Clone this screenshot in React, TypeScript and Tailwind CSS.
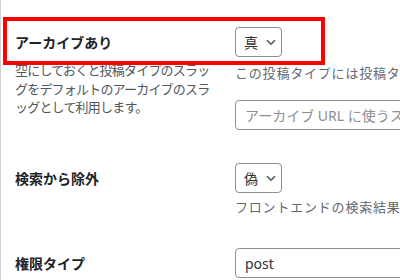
import React from "react";

const font = { fontFamily: '"Noto Sans", "Noto Sans CJK JP", sans-serif' };

function Chevron() {
  return (
    <svg width="10" height="7" viewBox="0 0 10 7" className="ml-[8px]">
      <path d="M1 1.2 L5 5.2 L9 1.2" fill="none" stroke="#50575e" strokeWidth="1.6" />
    </svg>
  );
}

function Select({ value }: { value: string }) {
  return (
    <div className="flex h-[30px] w-[47px] items-center rounded-[4px] border border-[#8c8f94] pl-[8px] text-[14px] text-[#2c3338]">
      <span>{value}</span>
      <Chevron />
    </div>
  );
}

function Input({ children, placeholder }: { children: React.ReactNode; placeholder?: boolean }) {
  return (
    <div
      className={
        "flex h-[30px] w-[320px] items-center overflow-hidden rounded-[4px] border border-[#8c8f94] pl-[9px] text-[14px] whitespace-nowrap " +
        (placeholder ? "text-[#8c8f94]" : "text-[#2c3338]")
      }
    >
      {children}
    </div>
  );
}

function Label({ children }: { children: React.ReactNode }) {
  return (
    <div className="flex h-[30px] items-center text-[14px] font-semibold text-[#1d2327] whitespace-nowrap">
      {children}
    </div>
  );
}

export default function App() {
  return (
    <div
      className="relative h-[280px] w-[400px] overflow-hidden border-l border-[#d0d0d0] bg-white pl-[14px] pt-[27px]"
      style={font}
    >
      <div className="flex">
        <div className="w-[220px] shrink-0">
          <Label>アーカイブあり</Label>
          <div className="mt-[4px] text-[13px] leading-[18.5px] tracking-[-0.8px] text-[#50575e] whitespace-nowrap">
            空にしておくと投稿タイプのスラッ
            <br />
            グをデフォルトのアーカイブのスラ
            <br />
            ッグとして利用します。
          </div>
        </div>
        <div className="min-w-0 flex-1">
          <Select value="真" />
          <div className="mt-[7px] text-[13px] leading-[18px] tracking-[0.8px] text-[#646970] whitespace-nowrap">
            この投稿タイプには投稿タイプのスラッグを使用します。
          </div>
          <div className="mt-[18px]">
            <Input placeholder>アーカイブ URL に使うスラッグ</Input>
          </div>
        </div>
      </div>

      <div className="mt-[33px] flex">
        <div className="w-[220px] shrink-0">
          <Label>検索から除外</Label>
        </div>
        <div className="min-w-0 flex-1">
          <Select value="偽" />
          <div className="mt-[5px] text-[13px] leading-[18px] tracking-[0.8px] text-[#646970] whitespace-nowrap">
            フロントエンドの検索結果からこの投稿タイプを除外します。
          </div>
        </div>
      </div>

      <div className="mt-[32px] flex">
        <div className="w-[220px] shrink-0">
          <Label>権限タイプ</Label>
        </div>
        <div className="min-w-0 flex-1">
          <Input>post</Input>
        </div>
      </div>

      <div className="pointer-events-none absolute left-[2px] top-[17px] h-[48px] w-[322px] border-4 border-[#ff0000]" />
    </div>
  );
}
